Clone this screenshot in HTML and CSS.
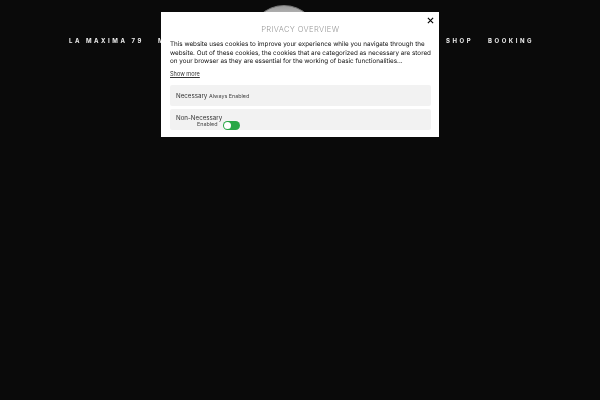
FILE: index.html
```html
<!DOCTYPE html>
<html lang="en">
<head>
<meta charset="utf-8">
<title>La Maxima 79</title>
<link rel="stylesheet" href="styles.css">
</head>
<body>
<header class="site-header">
  <nav class="nav-group nav-left">
    <a class="nav-link">LA MAXIMA 79</a>
    <a class="nav-link">M</a>
  </nav>
  <div class="logo"></div>
  <nav class="nav-group nav-right">
    <a class="nav-link">SHOP</a>
    <a class="nav-link">BOOKING</a>
  </nav>
</header>
<section class="modal">
  <button class="close" aria-label="Close">
    <svg viewBox="0 0 8 8" width="7" height="7"><path d="M1 1L7 7M7 1L1 7" stroke="#000" stroke-width="1.3" fill="none"/></svg>
  </button>
  <h2 class="modal-title">PRIVACY OVERVIEW</h2>
  <p class="modal-text">This website uses cookies to improve your experience while you navigate through the website. Out of these cookies, the cookies that are categorized as necessary are stored on your browser as they are essential for the working of basic functionalities...</p>
  <a class="show-more">Show more</a>
  <div class="row">
    <span class="row-name">Necessary</span>
    <span class="row-note">Always Enabled</span>
  </div>
  <div class="row row-toggle">
    <div class="row-stack">
      <span class="row-name">Non-Necessary</span>
      <span class="row-note row-note-inset">Enabled</span>
    </div>
    <span class="toggle"><span class="knob"></span></span>
  </div>
</section>
</body>
</html>
```
FILE: styles.css
```css
* { box-sizing: border-box; }
html, body { margin: 0; height: 100%; }
body {
  background: #0a0a0a;
  font-family: Inter, "Open Sans", sans-serif;
  overflow: hidden;
}
.site-header {
  display: flex;
  align-items: center;
  padding: 5px 66px 0 69px;
}
.nav-group { display: flex; gap: 14px; }
.nav-left { flex: 0 0 180px; }
.nav-right { flex: 1; justify-content: flex-end; gap: 15px; }
.nav-link {
  color: #eee;
  font-size: 6px;
  font-weight: 700;
  letter-spacing: 2.55px;
  white-space: nowrap;
  will-change: transform;
}
.logo {
  flex: 0 0 70px;
  height: 70px;
  border-radius: 50%;
  border: 1px solid #777;
  background: linear-gradient(180deg, #9a9a9a 0, #b5b5b5 12%, #777 30%, #444 100%);
}
.modal {
  position: fixed;
  left: 161px;
  top: 12px;
  width: 278px;
  height: 125px;
  background: #fff;
  padding: 13px 8.5px 0 9px;
  color: #222;
}
.close {
  position: absolute;
  top: 4px;
  right: 4px;
  width: 9px;
  height: 9px;
  padding: 0;
  border: 0;
  background: none;
  display: flex;
  align-items: center;
  justify-content: center;
}
.modal-title {
  margin: 0;
  font-size: 7.6px;
  font-weight: 300;
  line-height: 10px;
  letter-spacing: .35px;
  text-align: center;
  color: #999;
  will-change: transform;
}
.modal-text {
  margin: 5px -4px 0 0;
  font-size: 6.3px;
  line-height: 8.5px;
  color: #111;
  text-rendering: geometricPrecision;
  will-change: transform;
}
.show-more {
  display: block;
  margin-top: 4px;
  width: fit-content;
  font-size: 5.6px;
  line-height: 8px;
  text-decoration: underline;
  color: #333;
  will-change: transform;
}
.row {
  display: flex;
  align-items: center;
  gap: 2px;
  height: 21px;
  margin-top: 7.5px;
  padding: 1px 0 0 6px;
  background: #f2f2f2;
  border-radius: 2px;
}
.row-toggle { margin-top: 2.5px; padding-top: 0; gap: 1px; }
.row-stack { display: flex; flex-direction: column; align-items: flex-end; margin-top: 4px; }
.row-name { font-size: 6.2px; line-height: 6px; color: #333; will-change: transform; }
.row-note { font-size: 5.4px; line-height: 6px; color: #444; will-change: transform; }
.row-note-inset { margin-right: 5px; }
.toggle {
  position: relative;
  align-self: flex-end;
  width: 17px;
  height: 9px;
  border-radius: 5px;
  background: #28a745;
}
.knob {
  position: absolute;
  left: 1px;
  top: 1px;
  width: 7px;
  height: 7px;
  border-radius: 50%;
  background: #fff;
}
```
